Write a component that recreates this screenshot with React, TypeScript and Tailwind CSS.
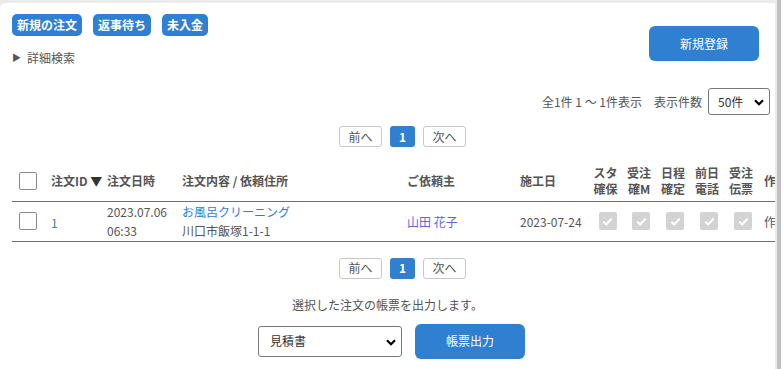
import { useState } from 'react';

// ────────────────────────────────────────────
// Small pieces
// ────────────────────────────────────────────

const font = { fontFamily: '"Noto Sans CJK JP", "Noto Sans", sans-serif' };

function Tag({ label }: { label: string }) {
  return (
    <span className="inline-flex h-[22px] items-center rounded-[5px] bg-[#2f80d1] px-[5px] text-[12px] font-bold leading-none text-white">
      {label}
    </span>
  );
}

function Chevron({ className }: { className?: string }) {
  return (
    <svg viewBox="0 0 10 7" className={className} fill="none" stroke="currentColor" strokeWidth="2.2">
      <path d="M1 1.2 5 5.2 9 1.2" />
    </svg>
  );
}

function Pager() {
  return (
    <div className="flex justify-center gap-2 pl-[30px]">
      <button className="h-[21px] w-[43px] rounded-[3px] border border-[#c8c8c8] bg-white text-[12px] leading-none text-[#555]">
        前へ
      </button>
      <button className="h-[21px] w-[25px] rounded-[3px] bg-[#2f80d1] text-[12px] font-bold leading-none text-white">
        1
      </button>
      <button className="h-[21px] w-[43px] rounded-[3px] border border-[#c8c8c8] bg-white text-[12px] leading-none text-[#555]">
        次へ
      </button>
    </div>
  );
}

function Box() {
  return <span className="block h-[18px] w-[18px] rounded-[2px] border border-[#8a8a8a] bg-white" />;
}

function DoneBox() {
  return (
    <span className="mx-auto flex h-[18px] w-[18px] translate-x-[2px] items-center justify-center rounded-[2px] bg-[#d3d3d3]">
      <svg viewBox="0 0 14 14" className="h-[13px] w-[13px]" fill="none" stroke="white" strokeWidth="2.2">
        <path d="M2.5 7.3 5.6 10.2 11.5 3.8" />
      </svg>
    </span>
  );
}

// ────────────────────────────────────────────
// App root
// ────────────────────────────────────────────

export default function App() {
  const [perPage, setPerPage] = useState('50');
  const [slip, setSlip] = useState('見積書');

  const flags = [
    ['スタ', '確保'],
    ['受注', '確M'],
    ['日程', '確定'],
    ['前日', '電話'],
    ['受注', '伝票'],
  ];

  return (
    <div className="flex h-[369px] w-[781px] overflow-hidden bg-[#ebebeb]" style={font}>
      <div className="w-[777px] min-w-0 shrink-0 pt-[3px] pr-[2px]">
        <div className="h-full overflow-hidden rounded-tl-md bg-white text-[12px] text-[#555]">
          {/* top: quick filters + register */}
          <div className="flex justify-between pt-[11px] pl-3 pr-4">
            <div>
              <div className="flex gap-[11px]">
                <Tag label="新規の注文" />
                <Tag label="返事待ち" />
                <Tag label="未入金" />
              </div>
              <div className="mt-[14px] flex items-center gap-[6px] leading-4">
                <span className="text-[9px] text-[#555]">▶</span>
                <span>詳細検索</span>
              </div>
            </div>
            <button className="mt-[12px] h-[35px] w-[110px] rounded-md bg-[#2f80d1] text-[12px] text-white">
              新規登録
            </button>
          </div>

          {/* count + per page */}
          <div className="mt-[22px] flex items-center justify-end gap-[6px] pr-[5px]">
            <span>全1件 1 ～ 1件表示</span>
            <span className="ml-[6px]">表示件数</span>
            <div className="relative">
              <select
                value={perPage}
                onChange={(e) => setPerPage(e.target.value)}
                className="h-[27px] w-[62px] appearance-none rounded-[3px] border border-[#777] bg-white pl-[9px] text-[12px] text-[#333]"
              >
                <option value="50">50件</option>
                <option value="100">100件</option>
              </select>
              <Chevron className="pointer-events-none absolute top-[11px] right-[6px] h-[7px] w-[10px] text-black" />
            </div>
          </div>

          <div className="mt-[11px]">
            <Pager />
          </div>

          {/* table */}
          <table className="mt-[15px] ml-3 w-[800px] table-fixed border-collapse text-left text-[12px]">
            <colgroup>
              <col className="w-[33px]" />
              <col className="w-[56px]" />
              <col className="w-[75px]" />
              <col className="w-[225px]" />
              <col className="w-[113px]" />
              <col className="w-[75px]" />
              <col className="w-[33px]" />
              <col className="w-[34px]" />
              <col className="w-[34px]" />
              <col className="w-[34px]" />
              <col className="w-[34px]" />
              <col className="w-[54px]" />
            </colgroup>
            <thead>
              <tr className="h-[39px] border-b border-[#6e6e6e] font-bold text-[#555]">
                <th className="pl-[7px]">
                  <Box />
                </th>
                <th className="pl-[6px] whitespace-nowrap">
                  注文ID <span className="text-[#333]">▼</span>
                </th>
                <th className="pl-[6px]">注文日時</th>
                <th className="pl-[6px]">注文内容 / 依頼住所</th>
                <th className="pl-[6px]">ご依頼主</th>
                <th className="pl-[6px]">施工日</th>
                {flags.map(([a, b], i) => (
                  <th key={i} className="text-center leading-4">
                    {a}
                    <br />
                    {b}
                  </th>
                ))}
                <th className="pl-[6px]">作</th>
              </tr>
            </thead>
            <tbody>
              <tr className="h-[40px] border-b border-[#6e6e6e] leading-[19px]">
                <td className="pl-[7px]">
                  <Box />
                </td>
                <td className="pl-[6px] pt-[2px] text-[#2f80d1]">1</td>
                <td className="pl-[6px]">
                  2023.07.06
                  <br />
                  06:33
                </td>
                <td className="pl-[6px]">
                  <span className="text-[#2f80d1]">お風呂クリーニング</span>
                  <br />
                  川口市飯塚1-1-1
                </td>
                <td className="pl-[6px] text-[#6464dc]">山田 花子</td>
                <td className="pl-[6px]">2023-07-24</td>
                {flags.map((_, i) => (
                  <td key={i}>
                    <DoneBox />
                  </td>
                ))}
                <td className="pl-[6px]">作</td>
              </tr>
            </tbody>
          </table>

          <div className="mt-[16px]">
            <Pager />
          </div>

          <p className="mt-[17px] text-center">選択した注文の帳票を出力します。</p>

          {/* output slip */}
          <div className="mt-[10px] flex items-center justify-center gap-[13px] pl-[8px]">
            <div className="relative">
              <select
                value={slip}
                onChange={(e) => setSlip(e.target.value)}
                className="h-[31px] w-[144px] appearance-none rounded-[3px] border border-[#777] bg-white pl-[11px] text-[12px] text-[#333]"
              >
                <option>見積書</option>
                <option>請求書</option>
                <option>領収書</option>
              </select>
              <Chevron className="pointer-events-none absolute top-[13px] right-[6px] h-[7px] w-[10px] text-black" />
            </div>
            <button className="h-[35px] w-[110px] rounded-md bg-[#2f80d1] text-[12px] text-white">帳票出力</button>
          </div>
        </div>
      </div>
      <div className="w-[4px] shrink-0 bg-[#c1c1c1]" />
    </div>
  );
}
